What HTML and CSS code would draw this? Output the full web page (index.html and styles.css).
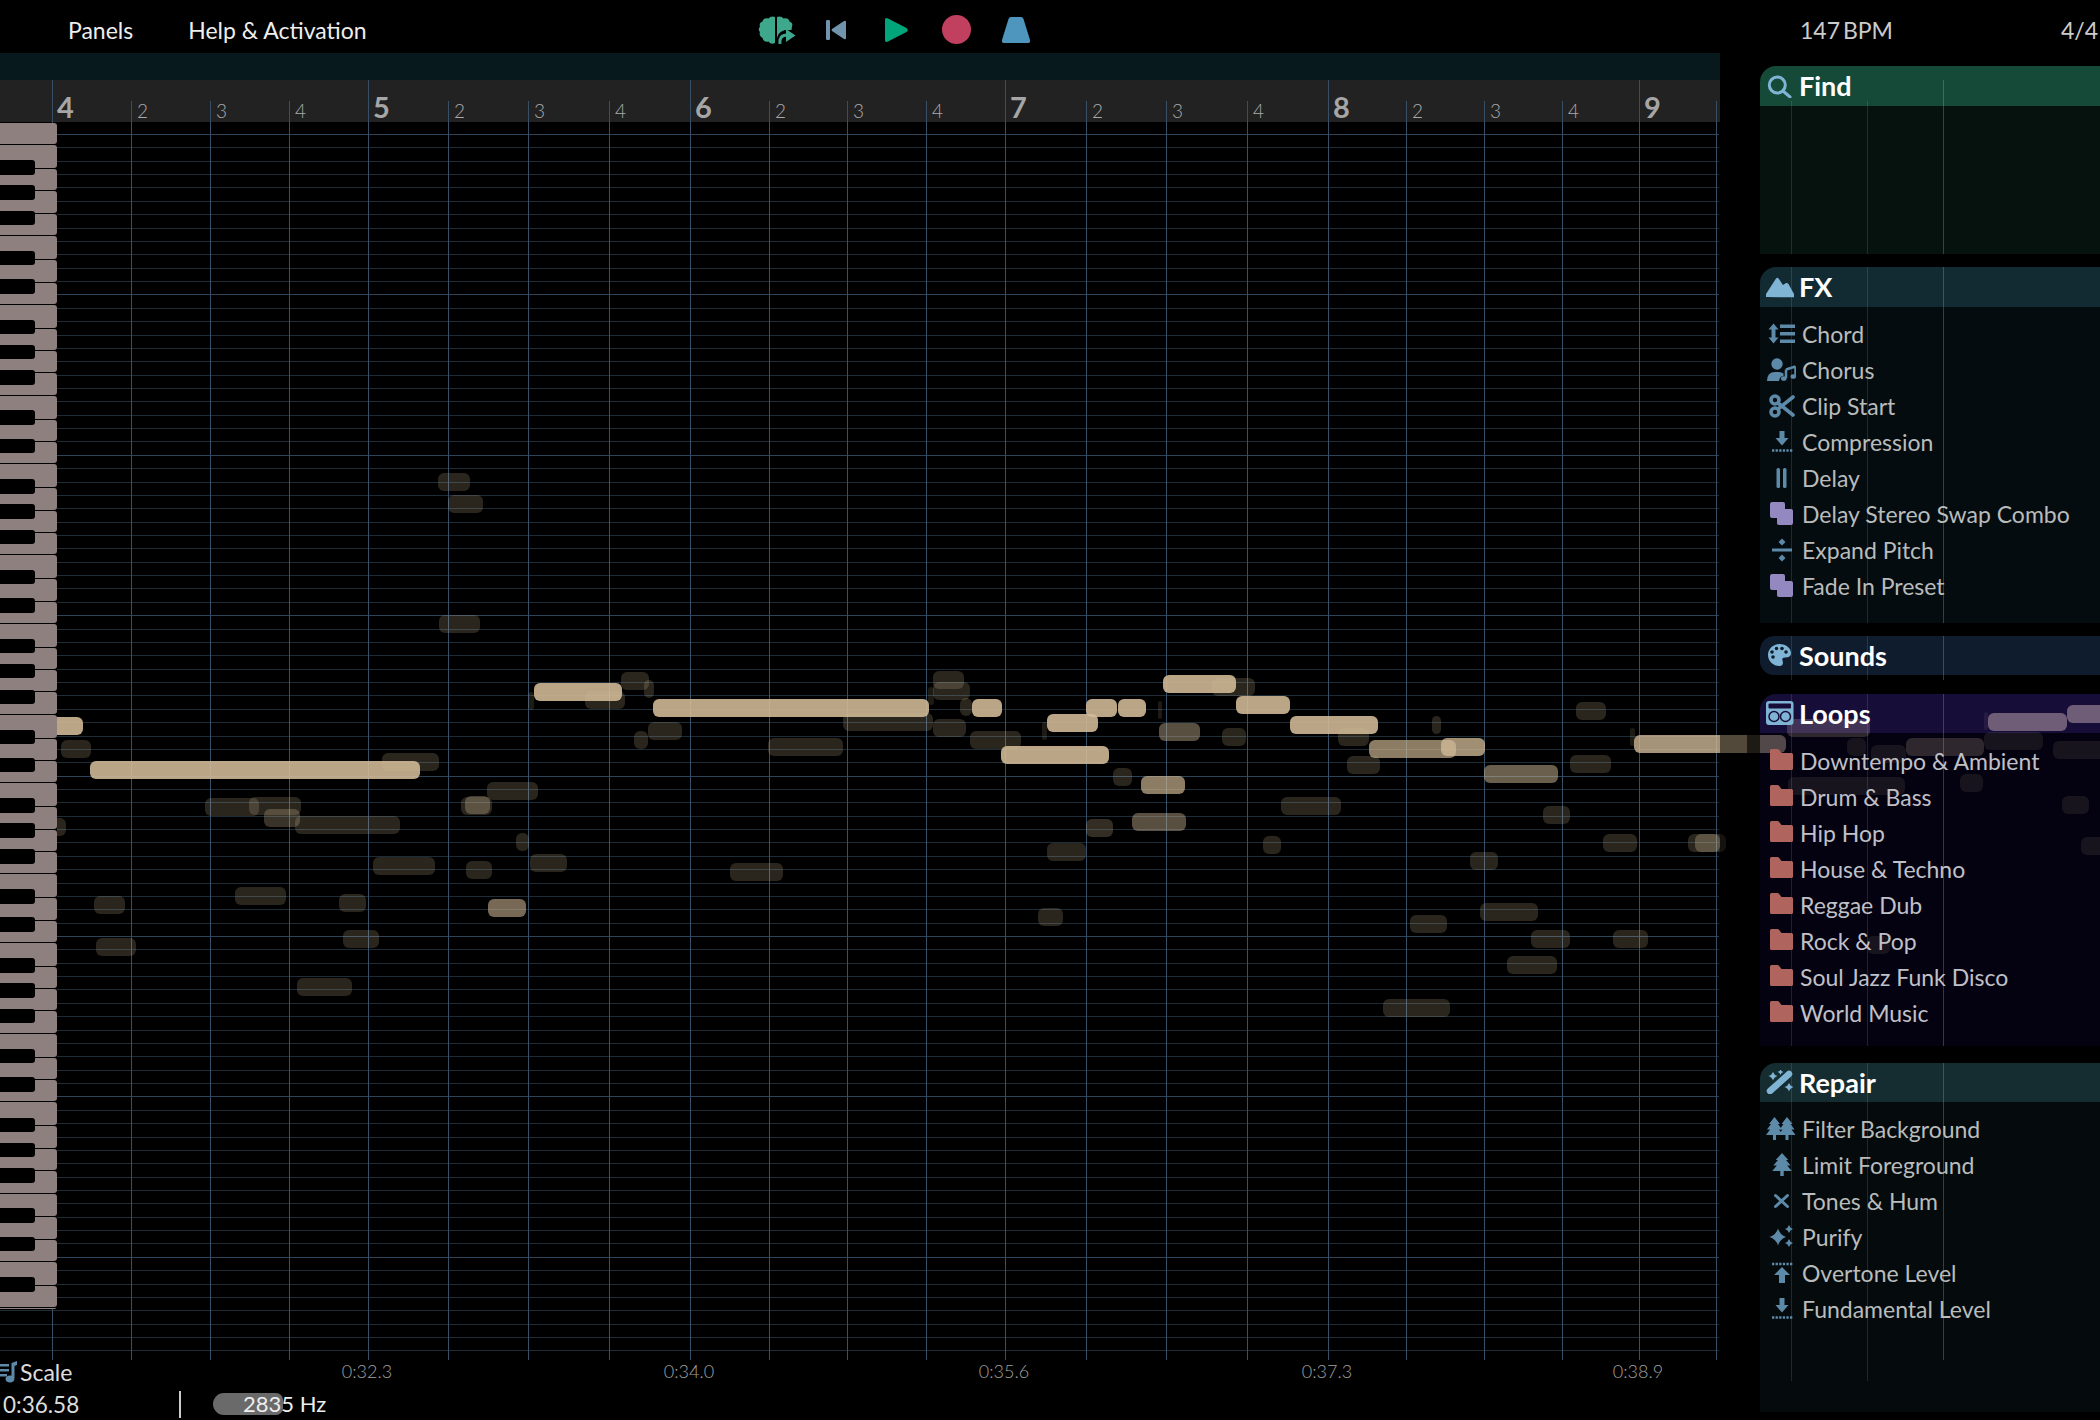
FILE: index.html
```html
<!DOCTYPE html>
<html lang="en">
<head>
    <meta charset="UTF-8">
    <title>Piano Roll</title>
    <link rel="stylesheet" href="styles.css">
</head>
<body>
    <svg class="sprite" aria-hidden="true">
        <defs>
            <path id="tree" d="M0 0L5.5 7H3.5L7.5 12.5H4.5L8.5 18H1.5V23H-1.5V18H-8.5L-4.5 12.5H-7.5L-3.5 7H-5.5Z"/>
            <path id="squares" d="M6 0H17Q19 0 19 2V7H25Q27 7 27 9V21Q27 23 25 23H13Q11 23 11 21V16H6Q4 16 4 14V2Q4 0 6 0Z"/>
            <path id="folder" d="M5.5 0H11.5Q12.5 0 13 .8L15.5 4H25.5Q27 4 27 5.5V19.5Q27 21 25.5 21H5.5Q4 21 4 19.5V1.5Q4 0 5.5 0Z"/>
            <g id="dotted-down">
                <path d="M13.5 1H18.5V8H22.5L16 15.5L9.5 8H13.5Z"/>
                <path class="dots" d="M6 20.5H27"/>
            </g>
        </defs>
    </svg>

    <header class="topbar">
        <nav class="menu">
            <span>Panels</span>
            <span>Help &amp; Activation</span>
        </nav>
        <div class="transport">
            <svg class="brain" width="38" height="28" viewBox="0 0 38 28">
                <path d="M17 1V27Q13 29 10.500 25.500Q5.500 26.500 4.500 22Q.5 20 2 16Q-.5 13.500 2 10.500Q.5 7 4.500 5.500Q5.500 1.500 10.500 2.500Q13 -.5 17 1Z"/>
                <path d="M19 1Q23 -.5 25.500 2.500Q30.500 1.500 31.500 5.500Q35.500 7 34 10.500L33.500 14H27L19 22Z"/>
                <path d="M19 18H24V28H19Z"/>
                <path class="brain-gap" d="M22 29Q20 17 30 17"/>
                <path class="brain-arrow" d="M22 28Q21 19 29 19"/>
                <path d="M28 13L37.500 19.500L28 26Z"/>
            </svg>
            <svg class="back" width="20" height="20" viewBox="0 0 20 20">
                <rect x="0" y="0" width="4" height="20" rx="1.200"/>
                <path d="M18 1Q20 0 20 2V18Q20 20 18 19L6 11Q5 10 6 9Z"/>
            </svg>
            <svg class="play" width="23" height="24" viewBox="0 0 23 24">
                <path d="M0 2Q0 -1 3 .5L21.500 10Q24 12 21.500 14L3 23.500Q0 25 0 22Z"/>
            </svg>
            <span class="record"></span>
            <svg class="metronome" width="28" height="26" viewBox="0 0 28 26">
                <path d="M9 0H19Q21 0 21.500 2L28 23Q28.500 26 26 26H2Q-.5 26 0 23L6.500 2Q7 0 9 0Z"/>
            </svg>
        </div>
        <span class="bpm">147 BPM</span>
        <span class="meter">4/4</span>
    </header>

    <main class="workspace">
        <section class="editor">
            <div class="strip"></div>
            <div class="ruler" id="ruler"></div>
            <div class="roll">
                <div class="piano" id="piano"></div>
            </div>
            <footer class="status">
                <div class="status-top" id="timeline">
                    <svg class="scale-icon" width="17" height="22" viewBox="0 0 17 22">
                        <path d="M0 3H9V5.500H0ZM0 8H9V10.500H0ZM0 13H7V15.500H0Z"/>
                        <path d="M11.500 2L17 0V4L14.500 5V17.500C14.500 20 12.500 21.500 10 21.500C7.500 21.500 5.500 20 5.500 18C5.500 16 7.500 14.500 10 14.500C10.500 14.500 11 14.600 11.500 14.700Z"/>
                    </svg>
                    <span class="scale-label">Scale</span>
                </div>
                <div class="status-bottom">
                    <span class="clock">0:36.58</span>
                    <span class="divider"></span>
                    <span class="freq">2835 Hz</span>
                </div>
            </footer>
        </section>

        <aside class="sidebar">
            <section class="panel panel-find">
                <h2 class="panel-head">
                    <svg class="head-icon" width="30" height="24" viewBox="0 0 30 24">
                        <circle class="icon-line" cx="11.300" cy="11" r="8"/>
                        <path class="icon-line" d="M17 17L24 23"/>
                    </svg>
                    Find
                </h2>
                <div class="panel-body"></div>
            </section>

            <section class="panel panel-fx">
                <h2 class="panel-head">
                    <svg class="head-icon" width="30" height="24" viewBox="0 0 30 24">
                        <path d="M0 22V19L10 3.500Q11.300 2 12.600 3.500L17 10L20 8Q21.300 7.500 22.500 9L28 19V22.300Z"/>
                    </svg>
                    FX
                </h2>
                <ul class="panel-body rows">
                    <li class="row">
                        <svg class="row-icon" width="30" height="24" viewBox="0 0 30 24">
                            <path d="M7.500 1.500L12.500 7.500H9.500V15.500H12.500L7.500 21.500L2.500 15.500H5.500V7.500H2.500Z"/>
                            <path d="M14 2.500H29V6H14ZM14 10H29V13.500H14ZM14 17.500H29V21H14Z"/>
                        </svg>
                        Chord
                    </li>
                    <li class="row">
                        <svg class="row-icon" width="30" height="24" viewBox="0 0 30 24">
                            <circle cx="11" cy="6" r="5.700"/>
                            <path d="M1 23Q1 14 9 14H13Q15.500 14 17.500 15.500V18Q14.500 18 13.500 21L13 23Z"/>
                            <path class="row-note" d="M20 11.500L29.500 8.500M20 11.500V20M29.500 8.500V18"/>
                            <ellipse cx="17.800" cy="20.500" rx="2.800" ry="2.300"/>
                            <ellipse cx="27.300" cy="18.500" rx="2.800" ry="2.300"/>
                        </svg>
                        Chorus
                    </li>
                    <li class="row">
                        <svg class="row-icon" width="30" height="24" viewBox="0 0 30 24">
                            <circle class="icon-line heavy" cx="9" cy="6" r="4"/>
                            <circle class="icon-line heavy" cx="9" cy="18" r="4"/>
                            <path class="icon-line heavy" d="M12 9L27 21M12 15L27 3"/>
                        </svg>
                        Clip Start
                    </li>
                    <li class="row">
                        <svg class="row-icon" width="30" height="24" viewBox="0 0 30 24"><use href="#dotted-down"/></svg>
                        Compression
                    </li>
                    <li class="row">
                        <svg class="row-icon" width="30" height="24" viewBox="0 0 30 24">
                            <rect x="10.500" y="2" width="3.500" height="20" rx="1.500"/>
                            <rect x="17" y="2" width="3.500" height="20" rx="1.500"/>
                        </svg>
                        Delay
                    </li>
                    <li class="row">
                        <svg class="row-icon preset" width="30" height="24" viewBox="0 0 30 24"><use href="#squares"/></svg>
                        Delay Stereo Swap Combo
                    </li>
                    <li class="row">
                        <svg class="row-icon" width="30" height="24" viewBox="0 0 30 24">
                            <path d="M16 .5L19.500 4L16 7.500L12.500 4ZM16 16.500L19.500 20L16 23.500L12.500 20ZM6 10.500H26V13.500H6Z"/>
                        </svg>
                        Expand Pitch
                    </li>
                    <li class="row">
                        <svg class="row-icon preset" width="30" height="24" viewBox="0 0 30 24"><use href="#squares"/></svg>
                        Fade In Preset
                    </li>
                </ul>
            </section>

            <section class="panel panel-sounds">
                <h2 class="panel-head">
                    <svg class="head-icon" width="30" height="24" viewBox="0 0 30 24">
                        <path d="M13.500 1C20 1 25 5 25 10C25 14 21.500 14.500 19 14.500C16.500 14.500 16 16 16.500 17.500C17.200 19.500 17.500 23 13.500 23C7 23 2 18 2 12C2 6 7 1 13.500 1Z"/>
                        <g class="palette-dots">
                            <circle cx="7" cy="14" r="1.800"/>
                            <circle cx="6" cy="9" r="1.800"/>
                            <circle cx="10.500" cy="5.500" r="1.800"/>
                            <circle cx="16" cy="5.500" r="1.800"/>
                            <circle cx="20" cy="9" r="1.800"/>
                        </g>
                    </svg>
                    Sounds
                </h2>
            </section>

            <section class="panel panel-loops">
                <h2 class="panel-head">
                    <svg class="head-icon" width="30" height="24" viewBox="0 0 30 24">
                        <rect x="0" y="0" width="27.500" height="24" rx="3"/>
                        <rect class="box-window" x="2.500" y="2.500" width="22.500" height="5" rx="1"/>
                        <circle class="box-reel" cx="8" cy="15.500" r="5"/>
                        <circle class="box-reel" cx="19.500" cy="15.500" r="5"/>
                    </svg>
                    Loops
                </h2>
                <ul class="panel-body rows">
                    <li class="row folder"><svg class="row-icon" width="30" height="24" viewBox="0 0 30 24"><use href="#folder"/></svg>Downtempo &amp; Ambient</li>
                    <li class="row folder"><svg class="row-icon" width="30" height="24" viewBox="0 0 30 24"><use href="#folder"/></svg>Drum &amp; Bass</li>
                    <li class="row folder"><svg class="row-icon" width="30" height="24" viewBox="0 0 30 24"><use href="#folder"/></svg>Hip Hop</li>
                    <li class="row folder"><svg class="row-icon" width="30" height="24" viewBox="0 0 30 24"><use href="#folder"/></svg>House &amp; Techno</li>
                    <li class="row folder"><svg class="row-icon" width="30" height="24" viewBox="0 0 30 24"><use href="#folder"/></svg>Reggae Dub</li>
                    <li class="row folder"><svg class="row-icon" width="30" height="24" viewBox="0 0 30 24"><use href="#folder"/></svg>Rock &amp; Pop</li>
                    <li class="row folder"><svg class="row-icon" width="30" height="24" viewBox="0 0 30 24"><use href="#folder"/></svg>Soul Jazz Funk Disco</li>
                    <li class="row folder"><svg class="row-icon" width="30" height="24" viewBox="0 0 30 24"><use href="#folder"/></svg>World Music</li>
                </ul>
            </section>

            <section class="panel panel-repair">
                <h2 class="panel-head">
                    <svg class="head-icon" width="30" height="24" viewBox="0 0 30 24">
                        <path d="M4 21L23 4" class="wand"/>
                        <path d="M7 2Q8 5 11.500 6Q8 7 7 10.500Q6 7 2.500 6Q6 5 7 2Z"/>
                        <path d="M14.500 -1Q15 1.500 17.500 2Q15 2.500 14.500 5Q14 2.500 11.500 2Q14 1.500 14.500 -1Z"/>
                        <path d="M23 13Q24 16 27.500 17Q24 18 23 21.500Q22 18 18.500 17Q22 16 23 13Z"/>
                    </svg>
                    Repair
                </h2>
                <ul class="panel-body rows">
                    <li class="row">
                        <svg class="row-icon" width="30" height="24" viewBox="0 0 30 24">
                            <use href="#tree" x="8.500"/>
                            <use href="#tree" x="21"/>
                        </svg>
                        Filter Background
                    </li>
                    <li class="row">
                        <svg class="row-icon" width="30" height="24" viewBox="0 0 30 24">
                            <use href="#tree" x="0" y="0" transform="translate(16 0) scale(1.150 1)"/>
                        </svg>
                        Limit Foreground
                    </li>
                    <li class="row">
                        <svg class="row-icon" width="30" height="24" viewBox="0 0 30 24">
                            <path class="icon-line" d="M9.500 6.500L21.500 17.500M21.500 6.500L9.500 17.500"/>
                        </svg>
                        Tones &amp; Hum
                    </li>
                    <li class="row">
                        <svg class="row-icon" width="30" height="24" viewBox="0 0 30 24">
                            <path d="M12 3.500Q14 10 20 12Q14 14 12 20.500Q10 14 3.500 12Q10 10 12 3.500Z"/>
                            <path d="M23 0Q24 3 27 4Q24 5 23 8Q22 5 19 4Q22 3 23 0Z"/>
                            <path d="M23 14Q24 17 27 18Q24 19 23 22Q22 19 19 18Q22 17 23 14Z"/>
                        </svg>
                        Purify
                    </li>
                    <li class="row">
                        <svg class="row-icon" width="30" height="24" viewBox="0 0 30 24">
                            <path class="dots" d="M6 3H27"/>
                            <path d="M16 6L24 14H19V22H13V14H8Z"/>
                        </svg>
                        Overtone Level
                    </li>
                    <li class="row">
                        <svg class="row-icon" width="30" height="24" viewBox="0 0 30 24"><use href="#dotted-down"/></svg>
                        Fundamental Level
                    </li>
                </ul>
            </section>
        </aside>
    </main>

    <div class="grid" id="grid"></div>
    <div class="notes" id="notes"></div>

    <script src="script.js"></script>
</body>
</html>
```

FILE: styles.css
```css
* {
    box-sizing: border-box;
}

body {
    position: relative;
    margin: 0;
    width: 2100px;
    height: 1420px;
    overflow: hidden;
    background: #000;
    color: #eee;
    font-family: 'Lato', sans-serif;
}

.sprite {
    position: absolute;
    width: 0;
    height: 0;
}

.topbar {
    display: flex;
    align-items: center;
    height: 53px;
    padding-top: 6px;
    font-size: 23px;
}

.menu {
    display: flex;
    gap: 55px;
    width: 758px;
    padding-left: 68px;
}

.transport {
    display: flex;
    align-items: center;
    width: 1042px;
}

.transport .brain path { fill: #3ea88c; }
.transport .brain .brain-gap { fill: none; stroke: #000; stroke-width: 6px; }
.transport .brain .brain-arrow { fill: none; stroke: #3ea88c; stroke-width: 3px; }
.back { margin-left: 30px; fill: #7193ab; }
.play { margin-left: 39px; fill: #00a67a; }

.record {
    width: 29px;
    height: 29px;
    margin-left: 34px;
    border-radius: 50%;
    background: #c2405f;
}

.metronome { margin-left: 31px; fill: #4f96bf; }

.bpm {
    width: 261px;
    color: #ccc;
    word-spacing: -3px;
}

.meter {
    color: #ccc;
}

.workspace {
    display: flex;
    height: 1367px;
}

.editor {
    display: flex;
    flex-direction: column;
    width: 1720px;
}

.strip {
    height: 27px;
    background: #08191d;
}

.ruler {
    position: relative;
    height: 42px;
    background: #222;
}

.bar-label {
    position: absolute;
    top: 12px;
    font-size: 29px;
    font-weight: 700;
    line-height: 30px;
    color: #a6a6a6;
}

.beat-label {
    position: absolute;
    top: 20px;
    font-size: 19px;
    line-height: 22px;
    font-weight: 300;
    color: #aaa;
}

.roll {
    position: relative;
    flex: 1;
}

.piano {
    position: absolute;
    z-index: 3;
    top: 1px;
    left: 0;
    width: 57px;
    height: 1186px;
    overflow: hidden;
    background: #000;
}

.white-key {
    margin-bottom: 1px;
    background: #8e807e;
    border-radius: 0 3px 3px 0;
}

.black-key {
    position: absolute;
    left: 0;
    width: 35px;
    height: 14.5px;
    background: #000;
    border-radius: 0 3px 3px 0;
}

.status {
    height: 60px;
}

.status-top {
    position: relative;
    display: flex;
    align-items: center;
    gap: 3px;
    height: 31px;
    padding-bottom: 7px;
}

.scale-icon {
    fill: #5c8aa8;
}

.scale-label {
    font-size: 23px;
    color: #ddd;
}

.time-label {
    position: absolute;
    top: 1px;
    font-size: 18px;
    line-height: 20px;
    font-weight: 300;
    color: #a0a0a0;
    transform: translateX(-50%);
}

.status-bottom {
    display: flex;
    align-items: center;
    height: 29px;
    padding: 0 0 3px 3px;
    font-size: 22.5px;
    color: #ddd;
}

.clock {
    width: 176px;
}

.divider {
    width: 2px;
    height: 27px;
    background: #ccc;
}

.freq {
    width: 70px;
    height: 22px;
    margin-left: 32px;
    padding-left: 30px;
    font-size: 22px;
    line-height: 22px;
    white-space: nowrap;
    background: #6a6a6a;
    border-radius: 11px 7px 7px 11px;
    color: #eee;
}

/* sidebar sits over the note layer, so notes show dimmed through the panels */
.sidebar {
    position: relative;
    z-index: 2;
    flex: 1;
    padding: 13px 0 0 40px;
    background: linear-gradient(90deg, rgba(0, 0, 0, 0.5) 27px, rgba(0, 0, 0, 0.82) 27px, rgba(0, 0, 0, 0.82) 40px, transparent 40px);
}

.panel {
    --line-bar: rgba(130, 190, 225, 0.3);
    --line-beat: rgba(120, 190, 210, 0.18);
    --lines:
        linear-gradient(var(--line-beat), var(--line-beat)) 31px 0 / 1px 100% no-repeat,
        linear-gradient(var(--line-beat), var(--line-beat)) 107px 0 / 1px 100% no-repeat,
        linear-gradient(var(--line-bar), var(--line-bar)) 183px 0 / 1px 100% no-repeat;
    overflow: hidden;
    border-top-left-radius: 16px;
}

.panel-head {
    display: flex;
    align-items: center;
    gap: 3px;
    height: 40px;
    margin: 0;
    padding: 0 0 1px 6px;
    font-size: 27px;
    font-weight: 700;
    color: #fff;
    background: var(--lines), var(--head);
}

.head-icon {
    fill: #80b4d4;
    stroke: none;
}

.panel-body {
    margin: 0;
    padding: 0;
    background: var(--lines), var(--body);
}

.rows {
    padding-top: 9px;
    list-style: none;
}

.row {
    display: flex;
    align-items: center;
    gap: 6px;
    height: 36px;
    padding-left: 6px;
    font-size: 23px;
    color: #b9bcbc;
}

.row-icon {
    flex: none;
    fill: #5c8aa8;
}

.row-icon.preset {
    fill: #9488c0;
}

.row-note {
    fill: none;
    stroke: #5c8aa8;
    stroke-width: 2.5px;
}

.icon-line {
    fill: none;
    stroke: currentColor;
    stroke-width: 3px;
    stroke-linecap: round;
}

.icon-line.heavy {
    stroke-width: 3.6px;
}

.head-icon .icon-line { color: #80b4d4; }
.row-icon .icon-line { color: #5c8aa8; }

.dots {
    fill: none;
    stroke: #5c8aa8;
    stroke-width: 2.6px;
    stroke-dasharray: 2.3 1.3;
}

.palette-dots { fill: #0f1c2e; }
.box-window { fill: #160e38; }
.box-reel { fill: #80b4d4; stroke: #160e38; stroke-width: 1.5px; }
.wand { fill: none; stroke: #80b4d4; stroke-width: 6.5px; stroke-linecap: round; }

.panel-find { --head: #154a38; --body: #06120e; margin-bottom: 13px; }
.panel-find .panel-body { height: 148px; }
.panel-find .panel-head {
    background:
        linear-gradient(var(--line-beat), var(--line-beat)) 31px 35px / 1px 100% no-repeat,
        linear-gradient(var(--line-beat), var(--line-beat)) 107px 35px / 1px 100% no-repeat,
        linear-gradient(var(--line-bar), var(--line-bar)) 183px 14px / 1px 100% no-repeat,
        var(--head);
}

.panel-fx { --head: #122a32; --body: #050c0f; margin-bottom: 13px; }
.panel-fx .panel-body { height: 316px; }

.panel-sounds {
    --head: #0f1c2e;
    height: 44px;
    margin-bottom: 14px;
    background: var(--lines);
    border-radius: 14px 0 0 0;
}
.panel-sounds .panel-head { height: 39px; border-radius: 14px 0 0 14px; }

.panel-loops {
    --head: rgba(42, 27, 108, 0.52);
    --body: rgba(8, 4, 30, 0.52);
    margin-bottom: 17px;
}
.panel-loops .panel-head { height: 39px; }
.panel-loops .panel-body { height: 313px; padding-top: 10px; }
.row.folder { gap: 4px; color: #c0c0c8; }
.row.folder .row-icon { fill: #b0645e; }

.panel-repair { --head: #152c30; --body: #050b0d; }
.panel-repair .panel-head { height: 39px; }
.panel-repair .panel-body {
    height: 310px;
    background:
        linear-gradient(var(--line-beat), var(--line-beat)) 31px 0 / 1px 279px no-repeat,
        linear-gradient(var(--line-beat), var(--line-beat)) 107px 0 / 1px 279px no-repeat,
        linear-gradient(var(--line-bar), var(--line-bar)) 183px 0 / 1px 258px no-repeat,
        var(--body);
}

/* free canvas: gridlines and notes are placed by time and pitch */
.grid,
.notes {
    position: absolute;
    inset: 0;
}

.notes {
    z-index: 1;
}

.h-line {
    position: absolute;
    left: 0;
    width: 1719px;
    height: 1px;
    background: #1e2c38;
}

.h-line.octave {
    background: #2d4358;
}

.v-line {
    position: absolute;
    width: 1px;
    background: #384f68;
}

.v-line.bar {
    top: 80px;
    height: 1280px;
}

.v-line.beat {
    top: 101px;
    height: 1259px;
}

.note {
    position: absolute;
    height: 18px;
    border-radius: 6px;
    background: #d4bc98;
}
```

FILE: script.js
```js
const BARS = [[52, 4], [368, 5], [690, 6], [1005, 7], [1328, 8], [1639, 9]];
const BEATS = [
    [131, 2], [210, 3], [289, 4],
    [448, 2], [528, 3], [609, 4],
    [769, 2], [847, 3], [926, 4],
    [1086, 2], [1166, 3], [1247, 4],
    [1406, 2], [1484, 3], [1562, 4],
    [1716, 0]
];
const TIMES = [[367, "0:32.3"], [689, "0:34.0"], [1004, "0:35.6"], [1327, "0:37.3"], [1638, "0:38.9"]];

// note levels
const D = 0.2, M = 0.42, H = 0.66, B = 0.88;

// x1, x2, y, level
const NOTES = [
    [40, 83, 717, B], [90, 420, 761, B], [534, 622, 683, B], [653, 929, 699, B],
    [972, 1002, 699, B], [1047, 1098, 714, B], [1086, 1117, 699, B], [1118, 1146, 699, B],
    [1001, 1109, 746, B], [1163, 1236, 675, B], [1236, 1290, 696, B], [1290, 1378, 716, B],
    [1369, 1456, 740, H], [1441, 1485, 738, 0.76], [1141, 1185, 776, H], [1634, 1786, 735, 0.78],
    [1988, 2067, 713, B], [2067, 2110, 705, B],
    [1159, 1200, 723, M], [1132, 1186, 813, M], [1484, 1558, 765, 0.5], [488, 526, 899, 0.56],
    [465, 490, 796, 0.3], [1695, 1720, 834, 0.3], [1787, 1870, 719, M], [1906, 1984, 738, M],
    [61, 91, 740, D], [382, 439, 753, D], [205, 259, 798, D], [249, 301, 797, D],
    [264, 300, 809, 0.27], [295, 400, 816, D], [40, 66, 818, D], [373, 435, 857, D],
    [235, 286, 887, D], [339, 366, 894, D], [94, 125, 896, D], [343, 379, 930, D],
    [96, 136, 938, D], [297, 352, 978, D], [438, 470, 473, D], [448, 483, 495, D],
    [439, 480, 615, D], [585, 625, 691, D], [621, 649, 672, D], [644, 654, 680, D],
    [528, 534, 692, 0.14], [843, 933, 713, D], [648, 682, 722, D], [634, 648, 731, D],
    [768, 843, 738, D], [933, 964, 671, D], [933, 970, 682, D], [928, 934, 687, 0.14],
    [960, 972, 698, D], [933, 966, 719, D], [970, 1021, 731, D], [487, 538, 782, D],
    [461, 492, 797, D], [516, 529, 833, D], [466, 492, 861, D], [530, 567, 854, D],
    [730, 783, 863, D], [1042, 1047, 722, 0.14], [1158, 1162, 701, 0.14], [1222, 1246, 728, D],
    [1212, 1255, 678, D], [1338, 1369, 728, D], [1347, 1380, 756, D], [1432, 1441, 716, D],
    [1113, 1132, 768, D], [1281, 1341, 797, D], [1086, 1113, 819, 0.24], [1047, 1086, 843, D],
    [1263, 1281, 836, D], [1470, 1498, 852, D], [1038, 1063, 908, D], [1410, 1447, 915, D],
    [1480, 1538, 903, D], [1383, 1450, 999, D], [1576, 1606, 702, D], [1570, 1611, 755, D],
    [1630, 1635, 728, 0.14], [1543, 1570, 806, D], [1603, 1637, 834, D], [1688, 1726, 834, D],
    [1531, 1570, 930, D], [1613, 1648, 930, D], [1507, 1557, 956, D],
    [1847, 1866, 738, D], [1871, 1906, 745, D], [1984, 2043, 732, D], [2053, 2110, 741, D],
    [1984, 1988, 712, 0.14], [1788, 1905, 777, D], [1960, 1983, 774, D], [2062, 2089, 796, D],
    [2081, 2110, 837, D], [1867, 1890, 936, D]
];

const OCTAVE = 159.6;
const PIANO_HEIGHT = 1186;
const WHITE_HEIGHTS = [22, 24, 22.4, 22.2, 22.6, 23.8, 22.6];
const BLACK_TOPS = [37, 62, 87.7, 127.7, 156];

function addLabel(parent, className, x, text) {
    const label = document.createElement("span");
    label.className = className;
    label.style.left = x + "px";
    label.textContent = text;
    parent.appendChild(label);
}

function buildGrid() {
    const grid = document.getElementById("grid");
    for (let n = 0; n < 92; n++) {
        const line = document.createElement("div");
        line.className = n % 12 === 0 ? "h-line octave" : "h-line";
        line.style.top = Math.round(134 + n * 13.367) + "px";
        grid.appendChild(line);
    }
    BARS.concat(BEATS).forEach(([x], i) => {
        const line = document.createElement("div");
        line.className = i < BARS.length ? "v-line bar" : "v-line beat";
        line.style.left = x + "px";
        grid.appendChild(line);
    });
}

function buildRuler() {
    const ruler = document.getElementById("ruler");
    BARS.forEach(([x, num]) => addLabel(ruler, "bar-label", x + 5, num));
    BEATS.forEach(([x, num]) => {
        if (num) addLabel(ruler, "beat-label", x + 6, num);
    });

    const timeline = document.getElementById("timeline");
    TIMES.forEach(([x, text]) => addLabel(timeline, "time-label", x, text));
}

function buildPiano() {
    const piano = document.getElementById("piano");
    for (let o = 0; o < 8; o++) {
        WHITE_HEIGHTS.forEach(h => {
            const key = document.createElement("div");
            key.className = "white-key";
            key.style.height = (h - 1) + "px";
            piano.appendChild(key);
        });
    }
    for (let o = 0; o < 8; o++) {
        BLACK_TOPS.forEach(top => {
            const y = top + o * OCTAVE;
            // the keyboard stops on a white key, no black key past the last one
            if (y > PIANO_HEIGHT - 20) return;
            const key = document.createElement("div");
            key.className = "black-key";
            key.style.top = y + "px";
            piano.appendChild(key);
        });
    }
}

function buildNotes() {
    const layer = document.getElementById("notes");
    NOTES.forEach(([x1, x2, y, level]) => {
        const note = document.createElement("div");
        note.className = "note";
        note.style.left = x1 + "px";
        note.style.width = (x2 - x1) + "px";
        note.style.top = y + "px";
        note.style.opacity = level;
        layer.appendChild(note);
    });
}

buildGrid();
buildRuler();
buildPiano();
buildNotes();
```
